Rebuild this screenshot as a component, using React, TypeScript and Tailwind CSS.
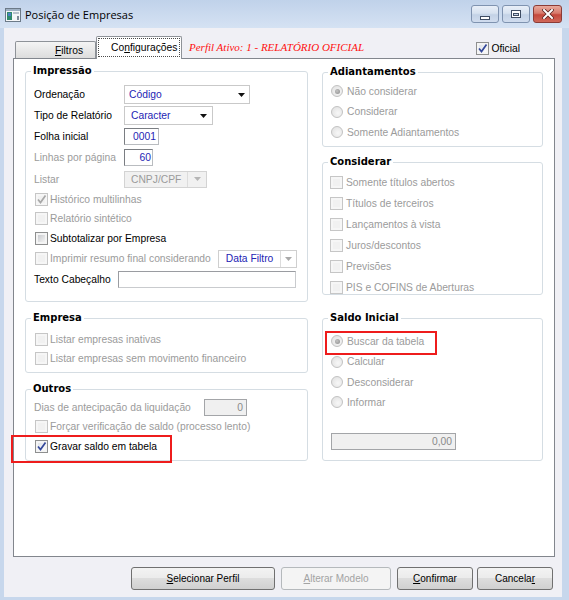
import type { ReactNode } from "react";

const GRAY = "text-[#9b9b9b]";
const BLUE = "text-[#2424b4]";

function Check({ checked, disabled }: { checked?: boolean; disabled?: boolean }) {
  return (
    <span
      className={`relative w-[13px] h-[13px] shrink-0 border ${
        disabled ? "border-[#c6c6c6] bg-[#f6f6f6]" : "border-[#8e8f8f] bg-[#f4f4f4]"
      }`}
    >
      <span
        className={`absolute inset-[2px] ${
          disabled
            ? "bg-[#f1f1f1]"
            : checked
            ? "bg-[linear-gradient(135deg,#dfe3ea,#fbfbfb)]"
            : "bg-[linear-gradient(135deg,#c9cbcf,#f3f3f3)]"
        }`}
      />
      {checked && (
        <svg className="absolute inset-0" width="11" height="11" viewBox="0 0 11 11">
          <path
            d="M2 5.5 L4.5 8.5 L9.5 1.5"
            fill="none"
            stroke={disabled ? "#a8a8a8" : "#34489a"}
            strokeWidth="1.7"
          />
        </svg>
      )}
    </span>
  );
}

function Radio({ selected }: { selected?: boolean }) {
  return (
    <span className="relative w-[12px] h-[12px] shrink-0 rounded-full border border-[#c2c2c2] bg-[radial-gradient(circle_at_60%_60%,#f7f7f7,#dedede)]">
      {selected && (
        <span className="absolute left-[2.5px] top-[2.5px] w-[5px] h-[5px] rounded-full bg-[radial-gradient(circle_at_40%_40%,#c4c4c4,#8a8a8a)]" />
      )}
    </span>
  );
}

function Arrow({ color }: { color: string }) {
  return (
    <svg width="7" height="4" viewBox="0 0 7 4" className="shrink-0">
      <path d="M0 0 H7 L3.5 4 Z" fill={color} />
    </svg>
  );
}

function Group({ title, className, children }: { title: string; className: string; children: ReactNode }) {
  return (
    <div className={`relative border border-[#d5dde3] rounded-[3px] ${className}`}>
      <span className="absolute left-[5px] -top-[8px] px-[2px] bg-white font-['DejaVu_Sans',sans-serif] font-bold text-[10px] leading-[13px] text-black">
        {title}
      </span>
      {children}
    </div>
  );
}

function CheckRow({ label, checked, disabled, h = "h-[19px]", gap = "gap-[2px]" }: { label: string; checked?: boolean; disabled?: boolean; h?: string; gap?: string }) {
  return (
    <div className={`flex items-center ${gap} ${h}`}>
      <Check checked={checked} disabled={disabled} />
      <span className={disabled ? GRAY : "text-black"}>{label}</span>
    </div>
  );
}

function RadioRow({ label, selected, h = "h-[20px]" }: { label: string; selected?: boolean; h?: string }) {
  return (
    <div className={`flex items-center gap-[4px] ${h}`}>
      <Radio selected={selected} />
      <span className={GRAY}>{label}</span>
    </div>
  );
}

function Btn({ w, children, disabled }: { w: string; children: ReactNode; disabled?: boolean }) {
  return (
    <div
      className={`${w} h-[23px] rounded-[3px] border flex items-center justify-center text-[10px] ${
        disabled
          ? "border-[#b5b9bc] bg-[#f4f4f4] text-[#a3a3a3]"
          : "border-[#707070] bg-[linear-gradient(to_bottom,#f3f3f3_0%,#ebebeb_50%,#dddddd_50%,#d0d0d0_100%)] text-black"
      }`}
    >
      {children}
    </div>
  );
}

function CaptionBtn({ kind }: { kind: "min" | "max" | "close" }) {
  if (kind === "close") {
    return (
      <div className="w-[29px] h-[18px] rounded-[3px] border border-[#8b3b36] bg-[linear-gradient(to_bottom,#e9a99c_0%,#d77a6c_45%,#c5483c_55%,#d0685a_100%)] flex items-center justify-center">
        <svg width="12" height="10" viewBox="0 0 12 10">
          <path d="M2 1 L10 9 M10 1 L2 9" stroke="#5a2420" strokeWidth="3.6" strokeLinecap="square" />
          <path d="M2 1 L10 9 M10 1 L2 9" stroke="#ffffff" strokeWidth="2" strokeLinecap="square" />
        </svg>
      </div>
    );
  }
  return (
    <div className="w-[28px] h-[18px] rounded-[3px] border border-[#7f93b0] bg-[linear-gradient(to_bottom,#e9eff8_0%,#d7e2f0_45%,#c3d2e6_55%,#d0dcee_100%)] flex items-center justify-center">
      {kind === "min" ? (
        <span className="mt-[7px] w-[10px] h-[4px] bg-white border border-[#3f4d63]" />
      ) : (
        <span className="w-[10px] h-[8px] border border-[#3f4d63] bg-white flex items-center justify-center">
          <span className="w-[6px] h-[3px] mt-[1px] bg-[#c9d6e8] border border-[#3f4d63]" />
        </span>
      )}
    </div>
  );
}

export default function App() {
  return (
    <div className="w-[569px] h-[600px] flex flex-col bg-[#c7d7ec] overflow-hidden font-['Liberation_Sans',Arial,sans-serif] text-[10.3px] leading-[13px] text-black">
      {/* title bar */}
      <div className="h-[28px] shrink-0 flex items-start pl-[5px] pr-[7px] bg-[linear-gradient(to_bottom,#c0d2ea,#d5e2f3)]">
        <svg width="16" height="16" viewBox="0 0 16 16" className="mt-[7px] shrink-0">
          <rect x="0.5" y="1.5" width="15" height="13" fill="#f4f6f8" stroke="#6c7a88" />
          <rect x="1" y="2" width="14" height="2" fill="#9fb1c4" />
          <rect x="2" y="5" width="5" height="8" fill="#2f8a6c" />
          <rect x="3" y="6" width="3" height="3" fill="#4a7fc0" />
          <rect x="8" y="5" width="6" height="2" fill="#b7c2cc" />
          <rect x="12" y="9" width="2" height="4" fill="#7d8a97" />
        </svg>
        <span className="mt-[7px] ml-[4px] font-['Open_Sans',sans-serif] text-[11px] leading-[15px] text-black">
          Posição de Empresas
        </span>
        <div className="ml-auto mt-[5px] flex gap-[3px]">
          <CaptionBtn kind="min" />
          <CaptionBtn kind="max" />
          <CaptionBtn kind="close" />
        </div>
      </div>

      {/* client area */}
      <div className="flex-1 ml-[4px] mr-[7px] mb-[3px] bg-[#f0f0f5] flex flex-col pl-[9px] pr-[7px]">
        {/* tab strip */}
        <div className="h-[30px] shrink-0 flex items-end pl-[2px]">
          <div className="w-[81px] h-[17px] border border-b-0 border-[#8e9298] rounded-t-[2px] bg-[linear-gradient(to_bottom,#f4f4f4,#dcdcdc)] pl-[39px] flex items-center">
            <span>
              <span className="underline">F</span>iltros
            </span>
          </div>
          <div className="relative z-10 -mb-px w-[86px] h-[23px] border border-b-0 border-[#8e9298] rounded-t-[2px] bg-white p-[1px] pb-[2px]">
            <div className="h-full border border-dotted border-[#4a4a4a] flex items-center pl-[12px]">
              <span>
                Co<span className="underline">n</span>figurações
              </span>
            </div>
          </div>
          <span className="ml-[7px] mb-[4px] font-['Liberation_Serif',serif] italic text-[11px] leading-[13px] text-[#ff1010]">
            Perfil Ativo: 1 - RELATÓRIO OFICIAL
          </span>
          <div className="ml-auto mr-[35px] mb-[3px] flex items-center gap-[2px]">
            <Check checked />
            <span>Oficial</span>
          </div>
        </div>

        {/* tab panel */}
        <div className="h-[499px] shrink-0 border border-[#82868d] bg-white flex gap-[14px] px-[11px] pt-[12px]">
          {/* left column */}
          <div className="w-[283px] flex flex-col">
            <Group title="Impressão" className="h-[231px] pt-[12px] pl-[8px]">
              <div className="flex items-center h-[21px]">
                <span className="w-[90px]">Ordenação</span>
                <div className="w-[126px] h-[19px] border border-[#c9c9c9] bg-white flex items-center pl-[4px] pr-[4px]">
                  <span className={`flex-1 ${BLUE}`}>Código</span>
                  <Arrow color="#111" />
                </div>
              </div>
              <div className="flex items-center h-[21px]">
                <span className="w-[90px]">Tipo de Relatório</span>
                <div className="w-[89px] h-[19px] border border-[#c9c9c9] bg-white flex items-center pl-[6px] pr-[5px]">
                  <span className={`flex-1 ${BLUE}`}>Caracter</span>
                  <Arrow color="#111" />
                </div>
              </div>
              <div className="flex items-center h-[21px]">
                <span className="w-[90px]">Folha inicial</span>
                <div className="w-[35px] h-[17px] border border-[#7a7d82] border-r-[#b9bcc0] border-b-[#b9bcc0] bg-white flex items-center justify-end pr-[2px]">
                  <span className={BLUE}>0001</span>
                </div>
              </div>
              <div className="flex items-center h-[21px]">
                <span className={`w-[90px] ${GRAY}`}>Linhas por página</span>
                <div className="w-[29px] h-[17px] border border-[#7a7d82] border-r-[#b9bcc0] border-b-[#b9bcc0] bg-white flex items-center justify-end pr-[1px]">
                  <span className={BLUE}>60</span>
                </div>
              </div>
              <div className="flex items-center h-[22px]">
                <span className={`w-[90px] ${GRAY}`}>Listar</span>
                <div className="w-[83px] h-[17px] border border-[#d3d3d3] bg-[#f1f1f1] flex items-center pl-[6px]">
                  <span className={`flex-1 ${GRAY}`}>CNPJ/CPF</span>
                  <span className="w-px h-full bg-[#dcdcdc]" />
                  <span className="w-[18px] flex justify-center">
                    <Arrow color="#b5b5b5" />
                  </span>
                </div>
              </div>
              <div className="pl-px">
                <CheckRow label="Histórico multilinhas" checked disabled />
                <CheckRow label="Relatório sintético" disabled />
                <CheckRow label="Subtotalizar por Empresa" h="h-[20px]" />
                <div className="flex items-center h-[21px]">
                  <Check disabled />
                  <span className={`ml-[2px] ${GRAY}`}>Imprimir resumo final considerando</span>
                  <div className="ml-[7px] w-[79px] h-[18px] border border-[#cfcfcf] bg-white flex items-center pl-[7px]">
                    <span className={`flex-1 ${BLUE}`}>Data Filtro</span>
                    <span className="w-px h-full bg-[#dcdcdc]" />
                    <span className="w-[15px] flex justify-center">
                      <Arrow color="#a9a9a9" />
                    </span>
                  </div>
                </div>
              </div>
              <div className="flex items-center h-[21px]">
                <span className="w-[84px]">Texto Cabeçalho</span>
                <div className="w-[178px] h-[17px] border border-[#9a9ca1] border-r-[#c9cbce] border-b-[#c9cbce] bg-white" />
              </div>
            </Group>

            <Group title="Empresa" className="mt-[16px] h-[55px] pt-[11px] pl-[9px]">
              <CheckRow label="Listar empresas inativas" disabled />
              <CheckRow label="Listar empresas sem movimento financeiro" disabled />
            </Group>

            <Group title="Outros" className="mt-[16px] h-[72px] pt-[8px] pl-[8px]">
              <div className="flex items-center h-[18px]">
                <span className={`w-[170px] ${GRAY}`}>Dias de antecipação da liquidação</span>
                <div className="w-[43px] h-[17px] border border-[#a3a5a8] bg-[#f0f0f0] flex items-center justify-end pr-[3px]">
                  <span className="text-[#8a8a8a]">0</span>
                </div>
              </div>
              <div className="pl-px">
                <CheckRow label="Forçar verificação de saldo (processo lento)" disabled h="h-[20px]" />
                <div className="relative">
                  <CheckRow label="Gravar saldo em tabela" checked h="h-[20px]" />
                  <span className="absolute -left-[24px] -top-[1px] w-[161px] h-[28px] border-2 border-[#ee1c1c]" />
                </div>
              </div>
            </Group>
          </div>

          {/* right column */}
          <div className="w-[221px] flex flex-col">
            <Group title="Adiantamentos" className="mt-px h-[75px] pt-[8px] pl-[8px]">
              <RadioRow label="Não considerar" selected />
              <RadioRow label="Considerar" h="h-[21px]" />
              <RadioRow label="Somente Adiantamentos" />
            </Group>

            <Group title="Considerar" className="mt-[15px] h-[133px] pt-[9px] pl-[7px]">
              <CheckRow label="Somente títulos abertos" disabled h="h-[21px]" gap="gap-[3px]" />
              <CheckRow label="Títulos de terceiros" disabled h="h-[21px]" gap="gap-[3px]" />
              <CheckRow label="Lançamentos à vista" disabled h="h-[21px]" gap="gap-[3px]" />
              <CheckRow label="Juros/descontos" disabled h="h-[21px]" gap="gap-[3px]" />
              <CheckRow label="Previsões" disabled h="h-[21px]" gap="gap-[3px]" />
              <CheckRow label="PIS e COFINS de Aberturas" disabled h="h-[20px]" gap="gap-[3px]" />
            </Group>

            <Group title="Saldo Inicial" className="mt-[23px] h-[143px] pt-[12px] pl-[8px]">
              <div className="relative">
                <RadioRow label="Buscar da tabela" selected />
                <span className="absolute -left-[6px] top-0 w-[112px] h-[24px] border-2 border-[#ee1c1c]" />
              </div>
              <RadioRow label="Calcular" h="h-[21px]" />
              <RadioRow label="Desconsiderar" />
              <RadioRow label="Informar" />
              <div className="mt-[21px] w-[125px] h-[17px] border border-[#a3a5a8] bg-[#f0f0f0] flex items-center justify-end pr-[3px]">
                <span className="text-[#8a8a8a]">0,00</span>
              </div>
            </Group>
          </div>
        </div>

        {/* buttons */}
        <div className="mt-[10px] flex justify-end pr-[2px]">
          <Btn w="w-[144px]">
            <span>
              <span className="underline">S</span>elecionar Perfil
            </span>
          </Btn>
          <div className="ml-[6px]">
            <Btn w="w-[110px]" disabled>
              <span>
                <span className="underline">A</span>lterar Modelo
              </span>
            </Btn>
          </div>
          <div className="ml-[6px]">
            <Btn w="w-[76px]">
              <span>
                <span className="underline">C</span>onfirmar
              </span>
            </Btn>
          </div>
          <div className="ml-[4px]">
            <Btn w="w-[76px]">
              <span>
                Cancela<span className="underline">r</span>
              </span>
            </Btn>
          </div>
        </div>
      </div>
    </div>
  );
}
